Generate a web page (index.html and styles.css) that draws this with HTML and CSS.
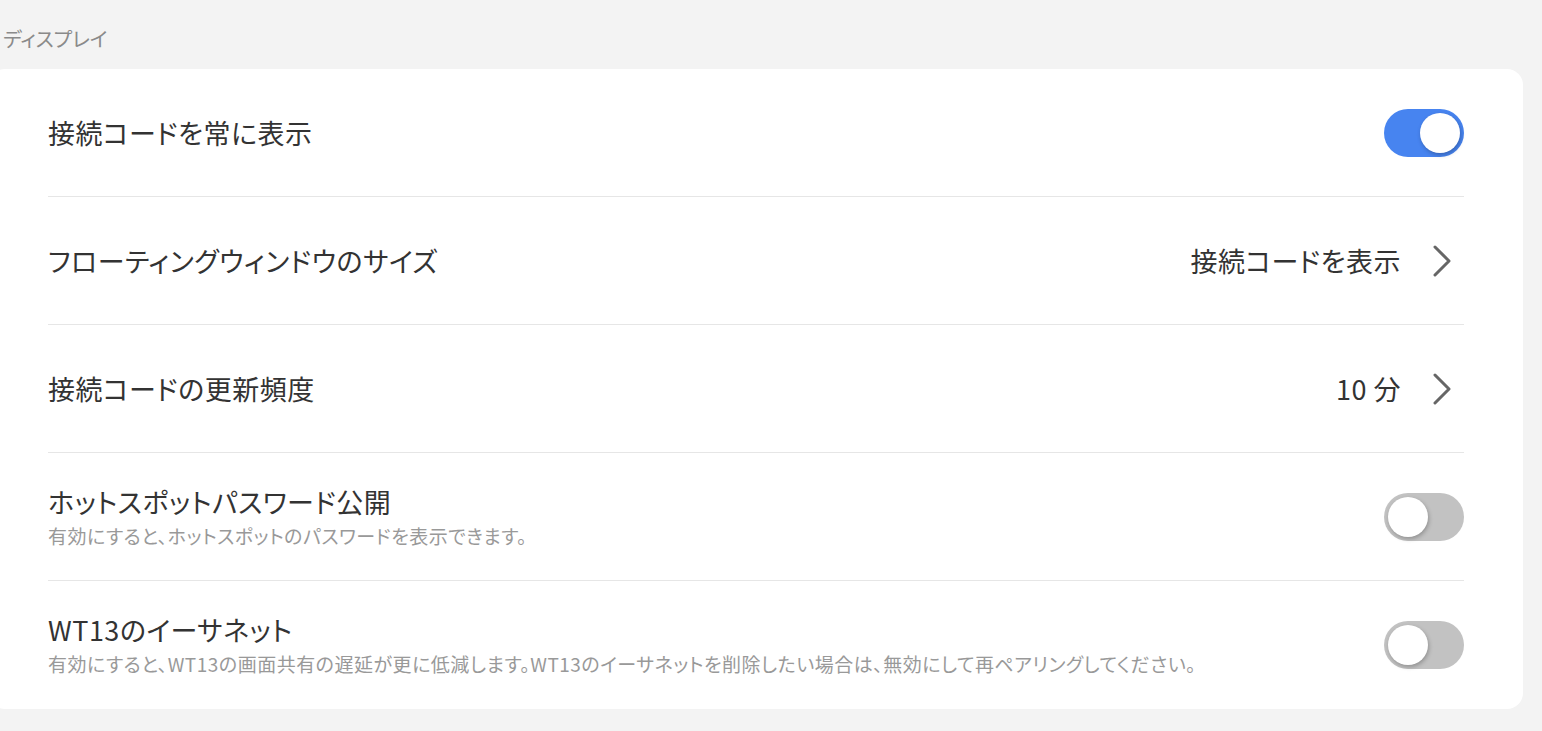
FILE: index.html
```html
<!DOCTYPE html>
<html lang="ja">
<head>
<meta charset="utf-8">
<link rel="stylesheet" href="styles.css">
</head>
<body>
<div class="page">
  <div class="section-title">ディスプレイ</div>
  <div class="card">
    <div class="row">
      <div class="texts"><div class="title">接続コードを常に表示</div></div>
      <div class="toggle on"><span class="thumb"></span></div>
    </div>
    <div class="row">
      <div class="texts"><div class="title">フローティングウィンドウのサイズ</div></div>
      <div class="value">接続コードを表示
        <svg class="chev" width="18" height="32" viewBox="0 0 18 32"><path d="M2 2 L16 16 L2 30" fill="none" stroke="#666" stroke-width="3" stroke-linecap="round" stroke-linejoin="round"/></svg>
      </div>
    </div>
    <div class="row">
      <div class="texts"><div class="title">接続コードの更新頻度</div></div>
      <div class="value">10 分
        <svg class="chev" width="18" height="32" viewBox="0 0 18 32"><path d="M2 2 L16 16 L2 30" fill="none" stroke="#666" stroke-width="3" stroke-linecap="round" stroke-linejoin="round"/></svg>
      </div>
    </div>
    <div class="row">
      <div class="texts">
        <div class="title">ホットスポットパスワード公開</div>
        <div class="sub">有効にすると、ホットスポットのパスワードを表示できます。</div>
      </div>
      <div class="toggle"><span class="thumb"></span></div>
    </div>
    <div class="row">
      <div class="texts">
        <div class="title">WT13のイーサネット</div>
        <div class="sub">有効にすると、WT13の画面共有の遅延が更に低減します。WT13のイーサネットを削除したい場合は、無効にして再ペアリングしてください。</div>
      </div>
      <div class="toggle"><span class="thumb"></span></div>
    </div>
  </div>
</div>
</body>
</html>
```

FILE: styles.css
```css
html, body {
  margin: 0;
  padding: 0;
  background: #f3f3f3;
  font-family: "Noto Sans CJK JP", "Noto Sans", sans-serif;
  font-feature-settings: "palt";
}
.page {
  margin-left: -11px;
  width: 1534px;
  padding-top: 24px;
}
.section-title {
  margin-left: 14px;
  font-size: 20px;
  line-height: 30px;
  color: #8a8a8a;
  height: 45px;
}
.card {
  background: #fff;
  border-radius: 16px;
  padding: 0 59px;
}
.row {
  height: 128px;
  box-sizing: border-box;
  display: flex;
  align-items: center;
  justify-content: space-between;
  border-bottom: 1px solid #e6e6e6;
}
.row:last-child {
  border-bottom: none;
}
.texts {
  display: flex;
  flex-direction: column;
  gap: 4px;
}
.title {
  font-size: 27px;
  line-height: 34px;
  color: #333;
  letter-spacing: 0.5px;
}
.sub {
  font-size: 19px;
  line-height: 26px;
  color: #999;
  letter-spacing: 0.5px;
}
.value {
  display: flex;
  align-items: center;
  gap: 32px;
  font-size: 27px;
  color: #333;
  margin-right: 13px;
  letter-spacing: 0.5px;
}
.chev {
  display: block;
}
.toggle {
  width: 80px;
  height: 48px;
  border-radius: 24px;
  background: #c2c2c2;
  position: relative;
  flex-shrink: 0;
}
.toggle.on {
  background: #4784f0;
}
.thumb {
  position: absolute;
  top: 4px;
  left: 4px;
  width: 40px;
  height: 40px;
  border-radius: 50%;
  background: #fff;
  box-shadow: 1px 2px 4px rgba(0,0,0,0.25);
}
.toggle.on .thumb {
  left: 36px;
}
```
